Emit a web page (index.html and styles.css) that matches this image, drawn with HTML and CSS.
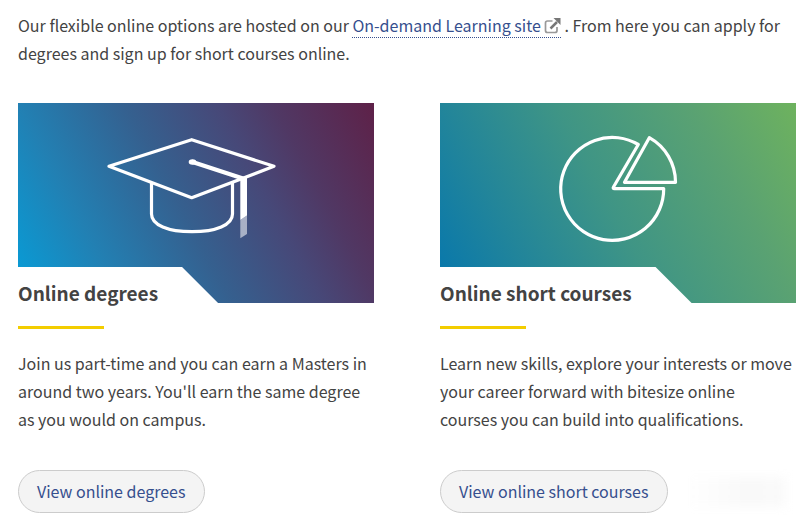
FILE: index.html
```html
<!DOCTYPE html>
<html lang="en">
<head>
    <meta charset="UTF-8">
    <meta name="viewport" content="width=device-width, initial-scale=1.0">
    <title>Online learning</title>
    <link rel="stylesheet" href="styles.css">
</head>
<body>
    <main class="content">
        <p class="intro">Our flexible online options are hosted on our <a href="#" class="text-link">On-demand Learning site <svg class="external" viewBox="0 0 17 16" aria-hidden="true"><path d="M8.500 3H3.500Q1.500 3 1.500 5v7.500q0 2 2 2H11q2 0 2-2V9" fill="none" stroke="#999" stroke-width="1.700"/><path d="M6.500 10.500L13 4" stroke="#777" stroke-width="2.500"/><path d="M9.500 0H16.500V7z" fill="#777"/></svg></a>. From here you can apply for degrees and sign up for short courses online.</p>

        <div class="cards">
            <section class="card">
                <div class="banner banner-degrees">
                    <svg viewBox="0 0 356 200" aria-hidden="true">
                        <g fill="none" stroke="#fff" stroke-width="3.200" stroke-linejoin="round">
                            <path d="M173.700 36.700L256 63.300L173.700 94.700L91 63.300Z"/>
                            <path d="M133.500 79.500V111C133.500 122 150 128.700 174 128.700S214.500 122 214.500 111V79.500"/>
                            <path d="M174.500 59L225 75.500" stroke-width="4.200" stroke-linecap="round"/>
                        </g>
                        <ellipse cx="174.500" cy="59" rx="3.800" ry="2.700" fill="#fff"/>
                        <path d="M222.300 74H229V112.500L222.300 117Z" fill="#fff"/>
                        <path d="M222.300 117L229 112.500V131L222.300 135.300Z" fill="#fff" fill-opacity="0.550"/>
                    </svg>
                </div>
                <h2>Online degrees</h2>
                <p>Join us part-time and you can earn a Masters in around two years. You'll earn the same degree as you would on campus.</p>
                <div class="actions">
                    <a href="#" class="button">View online degrees</a>
                </div>
            </section>

            <section class="card">
                <div class="banner banner-courses">
                    <svg viewBox="0 0 356 200" aria-hidden="true">
                        <g fill="none" stroke="#fff" stroke-width="3.200" stroke-linejoin="round">
                            <path d="M198.300 41.500A51.500 51.500 0 1 0 223.700 85.700H174.500Q172.500 85.700 173.500 84Z"/>
                            <path d="M209.300 34.700L184.500 79.300H235.500A51 51 0 0 0 209.300 34.700Z"/>
                        </g>
                    </svg>
                </div>
                <h2>Online short courses</h2>
                <p>Learn new skills, explore your interests or move your career forward with bitesize online courses you can build into qualifications.</p>
                <div class="actions">
                    <a href="#" class="button">View online short courses</a>
                    <span class="smudge"></span>
                </div>
            </section>
        </div>
    </main>
</body>
</html>
```
FILE: styles.css
```css
* {
    box-sizing: border-box;
}

body {
    margin: 0;
    background-color: #fff;
    color: #434343;
    font-family: "Noto Sans CJK SC", "Noto Sans", sans-serif;
    font-size: 16px;
    line-height: 28px;
}

p {
    margin: 0;
}

.content {
    padding: 11px 12px 8px 18px;
}

.text-link {
    color: #364f8e;
    text-decoration: none;
    border-bottom: 1px dotted #364f8e;
    margin-right: 3px;
}

.external {
    width: 17px;
    height: 16px;
    vertical-align: -2px;
}

.cards {
    display: grid;
    grid-template-columns: 1fr 1fr;
    gap: 66px;
    margin-top: 36px;
}

.card {
    display: flex;
    flex-direction: column;
    align-items: flex-start;
}

.card p {
    padding-right: 2px;
}

.banner {
    width: 100%;
}

.banner svg {
    display: block;
    width: 100%;
}

.banner-degrees {
    background: linear-gradient(62deg, #059fda 0%, #2280b3 23%, #35608f 46%, #474878 66%, #503864 78%, #5e2148 100%);
}

.banner-courses {
    background: linear-gradient(62deg, #0576ae 0%, #22859a 23%, #3f9585 48%, #5aa272 77%, #6eb25e 100%);
}

/* White tab cut into the bottom of the banner */
h2 {
    margin: -36px 0 0;
    padding: 12px 60px 19px 0;
    background-color: #fff;
    font-size: 19px;
    line-height: 28px;
    clip-path: polygon(0 0, calc(100% - 36px) 0, 100% 36px, 100% 100%, 0 100%);
}

/* Yellow rule under the title */
.card p::before {
    content: "";
    display: block;
    width: 86px;
    height: 3px;
    margin-bottom: 20px;
    background-color: #f3cd00;
}

.actions {
    display: flex;
    align-items: center;
    gap: 15px;
    width: 100%;
    margin-top: 37px;
}

.button {
    flex: none;
    padding: 6px 19px 7px 18px;
    border: 1px solid #ccc;
    border-radius: 22px;
    background-color: #f4f4f4;
    color: #364f8e;
    text-decoration: none;
}

.button:hover {
    background-color: #e8e8e8;
}

.smudge {
    flex: 1;
    height: 30px;
    margin-right: 10px;
    background: linear-gradient(90deg, #fff, #f9f9f9 60%, #fafafa);
    filter: blur(5px);
}
```
